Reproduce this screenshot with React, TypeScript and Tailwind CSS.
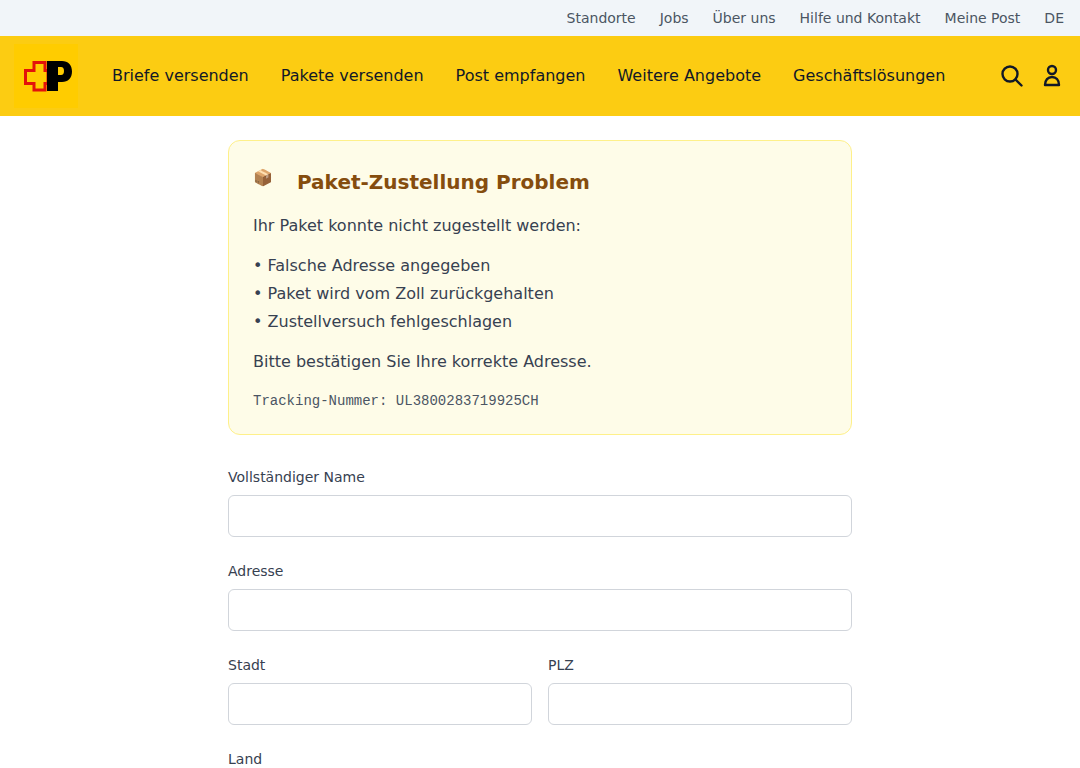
import { useState } from 'react'

const TOP_LINKS = ['Standorte', 'Jobs', 'Über uns', 'Hilfe und Kontakt', 'Meine Post', 'DE']
const NAV_LINKS = ['Briefe versenden', 'Pakete versenden', 'Post empfangen', 'Weitere Angebote', 'Geschäftslösungen']
const REASONS = ['Falsche Adresse angegeben', 'Paket wird vom Zoll zurückgehalten', 'Zustellversuch fehlgeschlagen']

function PostLogo() {
  return (
    <div className="w-16 h-16 bg-[#ffcc00]">
      <svg width="64" height="64" viewBox="0 0 64 64">
        <path d="M20 18.5h11v8h3v13h-3v6.5H20v-6.5h-8.5v-13H20z" fill="#ffcc00" stroke="#e3120b" strokeWidth="3" />
        <path d="M33 17h15c6 0 10 4 10 10.5S54 38 48 38h-4v9H33z" fill="#000" />
        <path d="M44 23h3c2 0 3 1.5 3 4s-1 4-3 4h-3z" fill="#ffcc00" />
      </svg>
    </div>
  )
}

function TextField({ label, value, onChange }: { label: string; value: string; onChange: (v: string) => void }) {
  return (
    <label className="block">
      <span className="block text-sm font-medium leading-5 text-[#374151] mb-2">{label}</span>
      <input
        value={value}
        onChange={(e) => onChange(e.target.value)}
        className="block w-full h-[42px] px-3 bg-white border border-[#d1d5db] rounded-md text-base"
      />
    </label>
  )
}

export default function App() {
  const [form, setForm] = useState({ name: '', address: '', city: '', zip: '', country: '' })

  function setField(key: keyof typeof form) {
    return (value: string) => setForm((f) => ({ ...f, [key]: value }))
  }

  return (
    <div className="h-[768px] overflow-hidden bg-white font-['DejaVu_Sans',sans-serif]">
      <div className="h-9 bg-[#f1f5f9] flex items-center justify-end gap-6 px-4 text-sm text-[#4b5563]">
        {TOP_LINKS.map((link) => (
          <a key={link}>{link}</a>
        ))}
      </div>
      <header className="h-20 bg-[#fccc12] flex items-center pl-[14px] pr-4">
        <PostLogo />
        <nav className="flex gap-8 ml-[34px] text-base text-[#111827]">
          {NAV_LINKS.map((link) => (
            <a key={link}>{link}</a>
          ))}
        </nav>
        <div className="ml-auto flex items-center gap-[16px] text-[#111827]">
          <svg width="24" height="24" viewBox="0 0 24 24" fill="none" stroke="currentColor" strokeWidth="2.4" strokeLinecap="round">
            <circle cx="10" cy="10" r="7.5" />
            <path d="M15.5 15.5l6 6" />
          </svg>
          <svg width="24" height="24" viewBox="0 0 24 24" fill="none" stroke="currentColor" strokeWidth="2.4" strokeLinejoin="round">
            <circle cx="12" cy="6" r="4" />
            <path d="M5 21c0-5 3-8 7-8s7 3 7 8z" />
          </svg>
        </div>
      </header>
      <main className="w-[624px] mx-auto pt-6">
        <section className="bg-[#fefce8] border border-[#fef08a] rounded-xl px-6 pt-6 pb-[23px] mb-8 text-[#374151]">
          <div className="flex items-start mb-[17px]">
            <span className="w-11 mt-px text-base leading-6 font-['Noto_Color_Emoji','DejaVu_Sans',sans-serif]">📦</span>
            <h2 className="text-xl font-bold leading-7 text-[#854d0e] mt-[3px]">Paket-Zustellung Problem</h2>
          </div>
          <p className="text-base leading-[26px] mb-[13px]">Ihr Paket konnte nicht zugestellt werden:</p>
          <ul className="text-base leading-7 mb-[13px]">
            {REASONS.map((reason) => (
              <li key={reason}>• {reason}</li>
            ))}
          </ul>
          <p className="text-base leading-[26px] mb-4">Bitte bestätigen Sie Ihre korrekte Adresse.</p>
          <p className="text-sm leading-5 text-[#4b5563] font-['Liberation_Mono',monospace]">Tracking-Nummer: UL3800283719925CH</p>
        </section>
        <form className="flex flex-col gap-6" onSubmit={(e) => e.preventDefault()}>
          <TextField label="Vollständiger Name" value={form.name} onChange={setField('name')} />
          <TextField label="Adresse" value={form.address} onChange={setField('address')} />
          <div className="grid grid-cols-2 gap-4">
            <TextField label="Stadt" value={form.city} onChange={setField('city')} />
            <TextField label="PLZ" value={form.zip} onChange={setField('zip')} />
          </div>
          <TextField label="Land" value={form.country} onChange={setField('country')} />
        </form>
      </main>
    </div>
  )
}
